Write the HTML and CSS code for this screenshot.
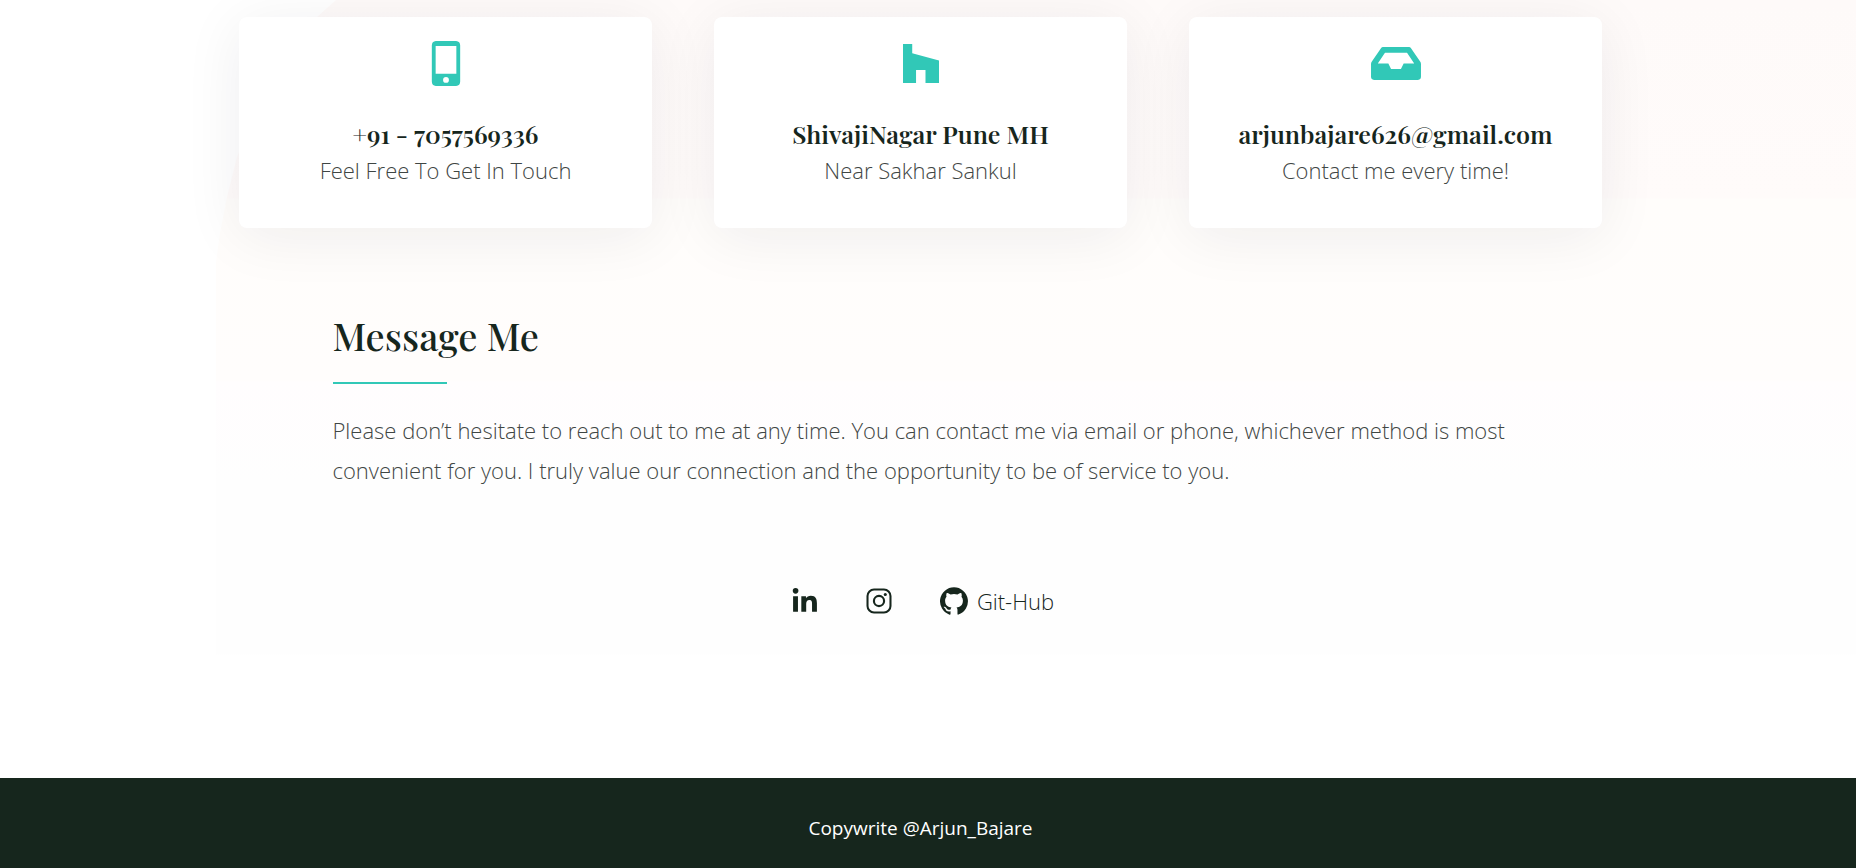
FILE: index.html
```
<!DOCTYPE html>
<html lang="en">
<head>
<meta charset="utf-8">
<meta name="viewport" content="width=device-width, initial-scale=1">
<title>Contact</title>
<link rel="stylesheet" href="styles.css">
</head>
<body>
<main class="contact">
  <section class="cards">
    <article class="card">
      <svg class="card-icon" viewBox="0 0 24 24" aria-hidden="true"><path fill-rule="evenodd" d="M7.500 2.200h9a2 2 0 0 1 1.800 2v16a2 2 0 0 1-1.800 2h-9a2 2 0 0 1-1.800-2v-16a2 2 0 0 1 1.800-2zm-.1 2.200v12.400h9.200V4.400zM12 18.200a1.300 1.300 0 1 0 0 2.600 1.300 1.300 0 0 0 0-2.600z"/></svg>
      <h3 class="card-title">+91 - 7057569336</h3>
      <p class="card-text">Feel Free To Get In Touch</p>
    </article>
    <article class="card">
      <svg class="card-icon" viewBox="0 0 24 24" aria-hidden="true"><path d="M4 3.600h4.100v4.100L20 10.900v10H14v-5.800H9.800v5.800H4z"/></svg>
      <h3 class="card-title">ShivajiNagar Pune MH</h3>
      <p class="card-text">Near Sakhar Sankul</p>
    </article>
    <article class="card">
      <svg class="card-icon" viewBox="0 0 24 24" aria-hidden="true"><path fill-rule="evenodd" d="M6.300 4.900h11.400a1 1 0 0 1 .9.450l4.200 6.100c.2.300.3.600.3 1v5.700a1.350 1.350 0 0 1-1.350 1.350H2.250A1.350 1.350 0 0 1 .9 18.150v-5.700c0-.4.100-.7.300-1l4.200-6.100a1 1 0 0 1 .9-.45zM7.100 7.400l-3.200 4.800h4.700l1.200 2.500h4.400l1.200-2.500h4.700l-3.200-4.800z"/></svg>
      <h3 class="card-title">arjunbajare626@gmail.com</h3>
      <p class="card-text">Contact me every time!</p>
    </article>
  </section>
  <section class="message">
    <h2 class="message-title">Message Me</h2>
    <p class="message-text">Please don’t hesitate to reach out to me at any time. You can contact me via email or phone, whichever method is most convenient for you. I truly value our connection and the opportunity to be of service to you.</p>
  </section>
  <nav class="social" aria-label="Social links">
    <a class="social-link" href="#linkedin" aria-label="LinkedIn"><svg class="social-icon" viewBox="0 0 24 24" aria-hidden="true"><circle cx="3.300" cy="2.600" r="2.600"/><path d="M1 7.500h4.500V22H1zM8.600 7.500h4.300v2c.8-1.400 2.300-2.400 4.500-2.400 4.600 0 5.600 3 5.600 6.900v8h-4.500v-7.100c0-1.700 0-3.900-2.400-3.900s-3 1.900-3 3.800V22H8.600z"/></svg></a>
    <a class="social-link" href="#instagram" aria-label="Instagram"><svg class="social-icon" viewBox="0 0 24 24" aria-hidden="true"><rect x="1.400" y="1.400" width="21.200" height="21.200" rx="6" fill="none" stroke="currentColor" stroke-width="1.900"/><circle cx="12" cy="12" r="4.700" fill="none" stroke="currentColor" stroke-width="2"/><circle cx="17.800" cy="6" r="1.400"/></svg></a>
    <a class="social-link" href="#github"><svg class="social-icon github" viewBox="0 0 24 24" aria-hidden="true"><path d="M12 .3a12 12 0 0 0-3.800 23.380c.6.120.83-.26.83-.57v-2.230c-3.340.73-4.040-1.420-4.040-1.420-.55-1.390-1.340-1.760-1.340-1.760-1.080-.74.090-.73.090-.73 1.200.09 1.840 1.240 1.840 1.240 1.070 1.830 2.810 1.300 3.490 1 .1-.78.420-1.310.76-1.610-2.660-.3-5.470-1.330-5.470-5.930 0-1.310.47-2.380 1.240-3.220-.14-.3-.54-1.520.1-3.180 0 0 1-.32 3.300 1.230a11.500 11.500 0 0 1 6 0c2.280-1.550 3.290-1.230 3.290-1.230.64 1.660.24 2.880.12 3.180a4.650 4.650 0 0 1 1.230 3.220c0 4.610-2.810 5.630-5.480 5.920.42.360.81 1.100.81 2.220v3.290c0 .32.190.69.800.57A12 12 0 0 0 12 .3"/></svg><span>Git-Hub</span></a>
  </nav>
</main>
<footer class="footer">Copywrite @Arjun_Bajare</footer>
</body>
</html>
```
FILE: styles.css
```
* { box-sizing: border-box; margin: 0; padding: 0; }
body {
  min-height: 100vh;
  display: flex;
  flex-direction: column;
  background: #fff;
  color: #16261d;
  font-family: "Open Sans", "Noto Sans", sans-serif;
}
.contact {
  position: relative;
  z-index: 0;
  flex: 1;
  padding: 17px 15px 0 0;
}
/* Tinted backdrop with a curved top-left corner */
.contact::before {
  content: "";
  position: absolute;
  z-index: -1;
  inset: 0 0 0 216px;
  background: linear-gradient(#fefaf9, #fffbfa 197px, #fffdfb 200px, #fffdfc 380px, #fffdfe 382px, #fefefe 480px, #fefefe 654px, #fff 656px);
  clip-path: polygon(120px 0, 101px 17px, 80px 45px, 60px 75px, 38px 115px, 21px 157px, 11px 197px, 4px 233px, 0 262px, 0 100%, 100% 100%, 100% 0);
}
.cards {
  width: 75%;
  max-width: 1363px;
  margin: 0 auto;
  display: grid;
  grid-template-columns: repeat(3, 1fr);
  gap: 62px;
}
.card {
  display: flex;
  flex-direction: column;
  align-items: center;
  padding: 16px 16px 39px;
  border-radius: 8px;
  background: #fff;
  box-shadow: 0 8px 60px rgba(22, 28, 36, 0.07);
  text-align: center;
}
.card-icon { width: 54px; height: 60px; margin-bottom: 24px; fill: #31c8b7; }
.card-title {
  font: 600 25px/34px "Playfair Display", "Liberation Serif", serif;
}
.card-text { color: #3f4644; font-size: 22px; font-weight: 320; line-height: 38px; }
.message { width: 1176px; max-width: 90%; margin: 84px auto 0; }
.message-title {
  font: 550 38px/48px "Playfair Display", "Liberation Serif", serif;
}
.message-title::after { content: ""; display: block; width: 114px; height: 2px; margin-top: 22px; background: #31c8b7; }
.message-text { margin: 26px -8px 0 0; color: #3f4644; font-size: 22px; font-weight: 320; line-height: 40px; }
.social { display: flex; justify-content: center; align-items: center; gap: 48px; margin: 95px 0; padding-left: 5px; }
.social-link { display: flex; align-items: center; gap: 9px; color: inherit; font-size: 22px; font-weight: 320; line-height: 32px; text-decoration: none; }
.social-icon { width: 26px; height: 26px; fill: currentColor; }
.github { width: 28px; height: 28px; }
.footer { padding: 38px 15px 28px 0; background: #16261d; color: #fff; font-size: 19px; line-height: 24px; text-align: center; }
```
